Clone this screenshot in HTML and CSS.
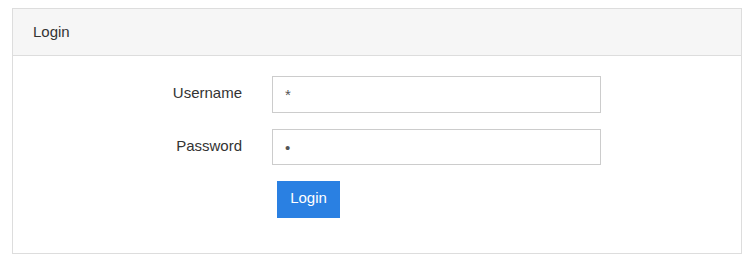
FILE: index.html
```html
<!DOCTYPE html>
<html>
<head>
<meta charset="utf-8">
<link rel="stylesheet" href="styles.css">
</head>
<body>
<div class="panel">
  <div class="panel-header">Login</div>
  <div class="panel-body">
    <form class="form">
      <label class="label" for="u">Username</label>
      <input class="input" id="u" type="text" value="*">
      <label class="label" for="p">Password</label>
      <input class="input input-short" id="p" type="password" value="x">
      <div class="actions"><button class="btn" type="button">Login</button></div>
    </form>
  </div>
</div>
</body>
</html>
```
FILE: styles.css
```css
html, body { margin: 0; padding: 0; background: #fff; }
body {
  padding: 8px 10px 0 12px;
  font-family: "Liberation Sans", Arial, sans-serif;
  font-size: 15px;
  color: #333;
}
.panel {
  border: 1px solid #ddd;
  height: 244px;
  box-sizing: content-box;
}
.panel-header {
  background: #f6f6f6;
  border-bottom: 1px solid #ddd;
  padding: 12px 20px;
  line-height: 22px;
  height: 22px;
}
.panel-body {
  padding: 20px 20px;
}
.form {
  display: grid;
  grid-template-columns: 209px 329px;
  column-gap: 30px;
  row-gap: 16px;
  align-items: start;
}
.label {
  text-align: right;
  color: #333;
  line-height: 17px;
  padding-top: 8px;
}
.input {
  box-sizing: border-box;
  width: 329px;
  height: 37px;
  border: 1px solid #ccc;
  border-radius: 0;
  padding: 0 12px;
  font-family: "Liberation Sans", Arial, sans-serif;
  font-size: 15px;
  color: #555;
  outline: none;
  margin: 0;
}
.input-short { height: 36px; }
.actions {
  grid-column: 2;
  padding-left: 5px;
}
.btn {
  background: #2a80e2;
  color: #fff;
  border: 0;
  border-radius: 0;
  height: 37px;
  width: 63px;
  padding: 0 0 4px;
  font-family: "Liberation Sans", Arial, sans-serif;
  font-size: 15px;
  display: block;
  margin: 0;
}
```
